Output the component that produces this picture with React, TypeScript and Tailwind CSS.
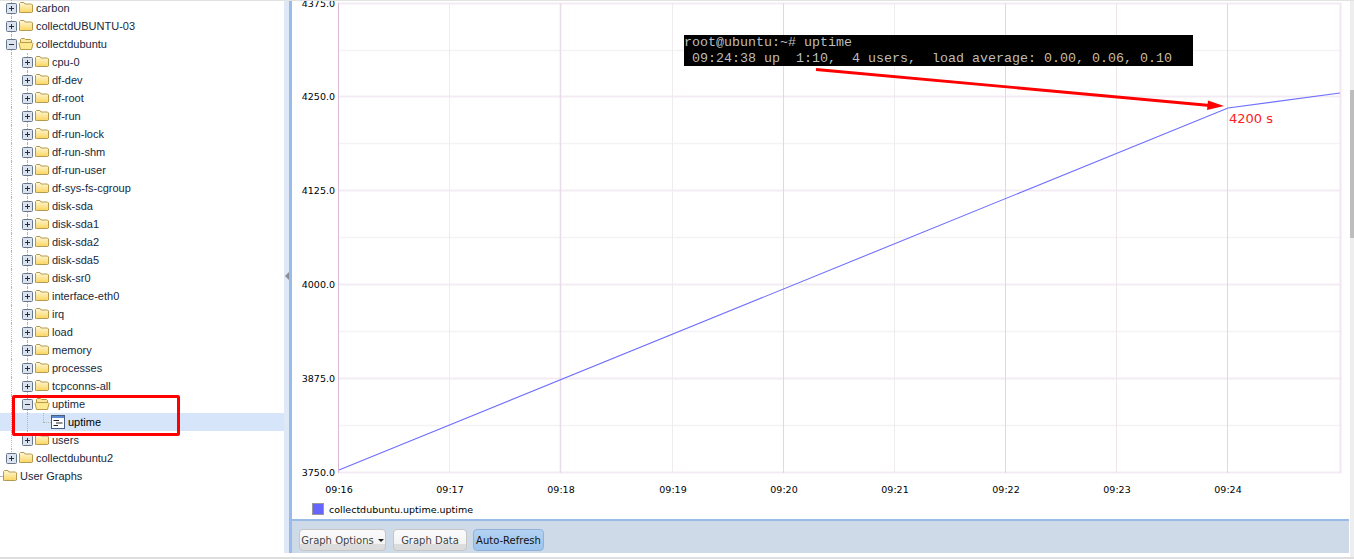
const folderLabels = ['cpu-0', 'df-dev', 'df-root', 'df-run', 'df-run-lock', 'df-run-shm', 'df-run-user', 'df-sys-fs-cgroup', 'disk-sda', 'disk-sda1', 'disk-sda2', 'disk-sda5', 'disk-sr0', 'interface-eth0', 'irq', 'load', 'memory', 'processes', 'tcpconns-all']

const yTicks = [
  { y: 3, label: '4375.0' },
  { y: 96, label: '4250.0' },
  { y: 190, label: '4125.0' },
  { y: 284, label: '4000.0' },
  { y: 378, label: '3875.0' },
  { y: 472, label: '3750.0' },
]
const yMinor = [50, 143, 237, 331, 425]
const xTicks = [
  { x: 339, label: '09:16', color: '#dcb8dc', width: 1 },
  { x: 450, label: '09:17', color: '#f0ebf0', width: 1 },
  { x: 561, label: '09:18', color: '#e8dce8', width: 1.5 },
  { x: 673, label: '09:19', color: '#f0ebf0', width: 1 },
  { x: 784, label: '09:20', color: '#e2d6e2', width: 1 },
  { x: 895, label: '09:21', color: '#f0ebf0', width: 1 },
  { x: 1006, label: '09:22', color: '#e2d6e2', width: 1 },
  { x: 1117, label: '09:23', color: '#ece6ec', width: 1 },
  { x: 1228, label: '09:24', color: '#e2d6e2', width: 1 },
]

function ToggleBox({ open }: { open: boolean }) {
  return (
    <svg width="11" height="11" viewBox="0 0 11 11" className="shrink-0">
      <rect x="0.5" y="0.5" width="10" height="10" rx="1" fill="#dde3ec" stroke="#66768d" />
      <path d={open ? 'M3 5.5H8' : 'M3 5.5H8M5.5 3V8'} stroke="#1f3048" />
    </svg>
  )
}

function FolderIcon({ open }: { open?: boolean }) {
  if (open) {
    return (
      <svg width="16" height="12" viewBox="0 0 16 12" className="-ml-[1px] shrink-0">
        <path d="M2.5 10.5V1.5l1-1h3l1 1h5l1 1v2" fill="#fbe9a0" stroke="#b09640" />
        <path d="M1 5.5l1-1h12l1 1-1.5 6H2.5z" fill="#ffe98f" stroke="#b89c46" />
      </svg>
    )
  }
  return (
    <svg width="14" height="12" viewBox="0 0 14 12" className="shrink-0">
      <defs>
        <linearGradient id="folderFill" x1="0" y1="0" x2="0" y2="1">
          <stop offset="0" stopColor="#fff8da" />
          <stop offset="1" stopColor="#fbd660" />
        </linearGradient>
      </defs>
      <path d="M0.5 10.5V1.5l1-1h3.5l1 1.5h6.5l1 1v7l-1 .5H1.5z" fill="url(#folderFill)" stroke="#b59b50" />
    </svg>
  )
}

function LeafIcon() {
  return (
    <svg width="14" height="14" viewBox="0 0 14 14" className="shrink-0">
      <rect x="0.5" y="0.5" width="13" height="13" fill="#fff" stroke="#4a5f80" />
      <rect x="1" y="1" width="12" height="2" fill="#5b8bd0" />
      <path d="M2.5 5.5H8M5 8H11.5M2.5 10.5H7" stroke="#222" />
    </svg>
  )
}

function Guide() {
  return (
    <span className="flex h-full w-4 shrink-0 justify-center">
      <span className="h-full w-0 border-l border-dotted border-[#b5b5b5]" />
    </span>
  )
}

function TreeRow({
  guides = 0,
  toggle,
  label,
  open,
  last,
}: {
  guides?: number
  toggle: 'plus' | 'minus'
  label: string
  open?: boolean
  last?: boolean
}) {
  return (
    <div className="flex h-[18px] items-center pl-[3px]">
      {guides > 0 && <Guide />}
      <span className="relative flex h-full w-4 shrink-0 justify-center">
        <span className={last ? 'h-1/2 w-0 border-l border-dotted border-[#b5b5b5]' : 'h-full w-0 border-l border-dotted border-[#b5b5b5]'} />
        <span className="absolute left-[3px] top-[4px] flex">
          <ToggleBox open={toggle === 'minus'} />
        </span>
      </span>
      <span className="flex w-[17px] shrink-0 items-center">
        <FolderIcon open={open} />
      </span>
      <span className="text-[11px] leading-[18px] text-[#17283c]">{label}</span>
    </div>
  )
}

const buttonClass =
  "h-[22px] whitespace-nowrap rounded-[4px] border border-[#c6c6c6] bg-gradient-to-b from-[#fbfbfb] via-[#f3f3f3] via-70% to-[#dcdcdc] to-70% font-['DejaVu_Sans',sans-serif] text-[10px] text-[#444]"

export default function App() {
  return (
    <div className="relative flex h-[559px] w-[1354px] flex-col overflow-hidden bg-white font-['Liberation_Sans',Arial,sans-serif]">
      <div className="h-px shrink-0 bg-[#e2e2e2]" />
      <div className="flex min-h-0 flex-1">
        {/* Metric tree */}
        <div className="-mt-[2px] w-[284px] shrink-0 overflow-hidden">
          <TreeRow toggle="plus" label="carbon" />
          <TreeRow toggle="plus" label="collectdUBUNTU-03" />
          <TreeRow toggle="minus" label="collectdubuntu" open />
          {folderLabels.map((label) => (
            <TreeRow key={label} guides={1} toggle="plus" label={label} />
          ))}
          <TreeRow guides={1} toggle="minus" label="uptime" open />
          <div className="flex h-[18px] items-center bg-[#d6e5fa] pl-[3px]">
            <Guide />
            <Guide />
            <span className="flex h-full w-4 shrink-0 flex-col items-center">
              <span className="h-[9px] w-0 border-l border-dotted border-[#b5b5b5]" />
              <span className="ml-2 w-2 border-t border-dotted border-[#b5b5b5]" />
            </span>
            <span className="flex w-[17px] shrink-0 items-center">
              <LeafIcon />
            </span>
            <span className="text-[11px] leading-[18px] text-black">uptime</span>
          </div>
          <TreeRow guides={1} toggle="plus" label="users" last />
          <TreeRow toggle="plus" label="collectdubuntu2" last />
          <div className="flex h-[18px] items-center">
            <span className="mr-px w-[2px] border-t border-dotted border-[#b5b5b5]" />
            <span className="flex w-[17px] shrink-0 items-center">
              <FolderIcon />
            </span>
            <span className="text-[11px] leading-[18px] text-[#17283c]">User Graphs</span>
          </div>
        </div>

        {/* Splitter */}
        <div className="mb-1 flex w-2 shrink-0 border-r-[3px] border-[#99bbe8] bg-[#dfe8f6]">
          <div className="flex flex-1 items-center justify-center pb-[2px]">
            <span className="h-0 w-0 border-y-[4px] border-r-[4px] border-y-transparent border-r-[#8a8f96]" />
          </div>
        </div>

        {/* Graph panel */}
        <div className="flex min-w-0 flex-1 flex-col">
          <div className="relative min-h-0 flex-1 overflow-hidden">
            <svg width="1058" height="518" viewBox="292 1 1058 518" className="block">
              {yMinor.map((y) => (
                <line key={y} x1="338" x2="1341" y1={y + 0.5} y2={y + 0.5} stroke="#f5f2f5" strokeWidth="1.5" />
              ))}
              {yTicks.map((t) => (
                <line key={t.y} x1="338" x2="1341" y1={t.y + 0.5} y2={t.y + 0.5} stroke="#f3ebf4" strokeWidth="2" />
              ))}
              {xTicks.map((t) => (
                <line key={t.x} x1={t.x - 0.5} x2={t.x - 0.5} y1="3" y2="473" stroke={t.color} strokeWidth={t.width} />
              ))}
              <line x1="1340.5" x2="1340.5" y1="3" y2="473" stroke="#f1e6f1" strokeWidth="2" />
              <polyline points="339,470 1228,108 1340,93" fill="none" stroke="#6f6fff" strokeWidth="1.1" />
              {yTicks.map((t) => (
                <text key={t.label} x="335" y={t.y + 4} textAnchor="end" fontSize="9.5" fontFamily="DejaVu Sans" fill="#000">
                  {t.label}
                </text>
              ))}
              {xTicks.map((t) => (
                <text key={t.label} x={t.x} y="493" textAnchor="middle" fontSize="9.5" fontFamily="DejaVu Sans" fill="#000">
                  {t.label}
                </text>
              ))}
              <rect x="312.5" y="503.5" width="11" height="11" fill="#6666ff" stroke="#999" />
              <text x="329" y="513" fontSize="9.5" fontFamily="DejaVu Sans" fill="#000">
                collectdubuntu.uptime.uptime
              </text>
              {/* annotation arrow */}
              <line x1="816" y1="69.5" x2="1210" y2="105.5" stroke="#ff0000" strokeWidth="2.8" />
              <polygon points="1208,100.5 1224,106 1207,110" fill="#ff0000" />
            </svg>
            {/* pasted terminal output */}
            <div className="absolute left-[392px] top-[34px] h-[31px] w-[509px] whitespace-pre bg-black font-['Liberation_Mono',monospace] text-[13.33px] leading-[15.5px] text-[#bdbdbd]">
              <div>root@ubuntu:~# uptime</div>
              <div> 09:24:38 up  1:10,  4 users,  load average: <span className="text-[#c8bda6]">0.00, 0.06, 0.10</span></div>
            </div>
            <div className="absolute left-[937px] top-[110px] font-['DejaVu_Sans',sans-serif] text-[13px] leading-4 text-[#ff2020]">
              4200 s
            </div>
          </div>
          <div className="mr-px flex h-[34px] shrink-0 items-center gap-[7px] border-t-2 border-[#99bbe8] bg-[#cedae8] pl-[7px] pt-[6px]">
            <button className={`flex w-[87px] items-center justify-center gap-1 ${buttonClass}`}>
              Graph Options
              <span className="h-0 w-0 border-x-[3px] border-t-[3px] border-x-transparent border-t-[#222]" />
            </button>
            <button className={`w-[74px] ${buttonClass}`}>Graph Data</button>
            <button className="-ml-[1px] h-[22px] w-[71px] whitespace-nowrap rounded-[4px] border border-[#8fb2dc] bg-gradient-to-b from-[#b4d2f2] to-[#9cc4ee] font-['DejaVu_Sans',sans-serif] text-[10px] text-[#111]">
              Auto-Refresh
            </button>
          </div>
          <div className="h-1 shrink-0 bg-white" />
        </div>

        {/* Scrollbar */}
        <div className="flex w-1 shrink-0 flex-col bg-[#eeeeee]">
          <div className="mt-[89px] h-[148px] bg-[#bdbdbd]" />
        </div>
      </div>
      <div className="h-[2px] shrink-0 bg-[#dedede]" />

      {/* annotation box drawn over the tree */}
      <div className="absolute left-[12px] top-[395px] h-[41px] w-[168px] rounded-[2px] border-[3px] border-[#ff0000]" />
    </div>
  )
}
